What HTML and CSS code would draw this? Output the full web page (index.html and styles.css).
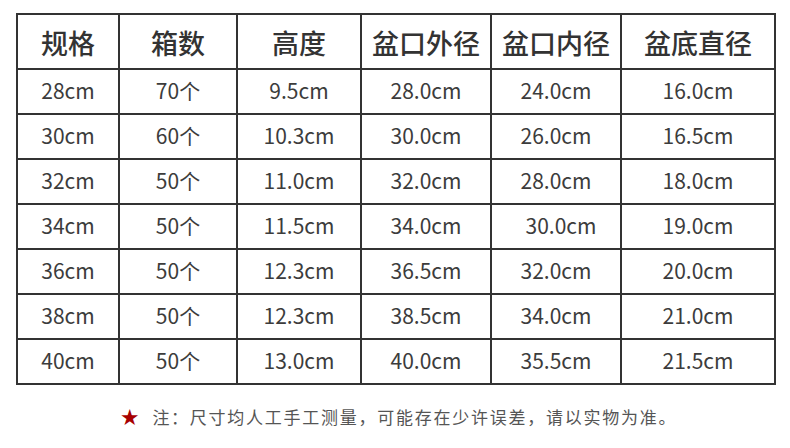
FILE: index.html
```html
<!DOCTYPE html>
<html lang="zh-CN">
<head>
<meta charset="utf-8">
<link rel="stylesheet" href="styles.css">
</head>
<body>
<div class="page">
  <table class="spec">
    <colgroup>
      <col class="c1"><col class="c2"><col class="c3"><col class="c4"><col class="c5"><col class="c6">
    </colgroup>
    <thead>
      <tr><th>规格</th><th>箱数</th><th>高度</th><th>盆口外径</th><th>盆口内径</th><th>盆底直径</th></tr>
    </thead>
    <tbody>
      <tr><td>28cm</td><td>70个</td><td>9.5cm</td><td>28.0cm</td><td>24.0cm</td><td>16.0cm</td></tr>
      <tr><td>30cm</td><td>60个</td><td>10.3cm</td><td>30.0cm</td><td>26.0cm</td><td>16.5cm</td></tr>
      <tr><td>32cm</td><td>50个</td><td>11.0cm</td><td>32.0cm</td><td>28.0cm</td><td>18.0cm</td></tr>
      <tr><td>34cm</td><td>50个</td><td>11.5cm</td><td>34.0cm</td><td class="shift">30.0cm</td><td>19.0cm</td></tr>
      <tr><td>36cm</td><td>50个</td><td>12.3cm</td><td>36.5cm</td><td>32.0cm</td><td>20.0cm</td></tr>
      <tr><td>38cm</td><td>50个</td><td>12.3cm</td><td>38.5cm</td><td>34.0cm</td><td>21.0cm</td></tr>
      <tr><td>40cm</td><td>50个</td><td>13.0cm</td><td>40.0cm</td><td>35.5cm</td><td>21.5cm</td></tr>
    </tbody>
  </table>
  <p class="note"><span class="star">★</span><span class="note-text">注：尺寸均人工手工测量，可能存在少许误差，请以实物为准。</span></p>
</div>
</body>
</html>
```
FILE: styles.css
```css
html, body {
  margin: 0;
  padding: 0;
  background: #ffffff;
}
.page {
  width: 790px;
  height: 448px;
  padding: 13px 0 0 16px;
  box-sizing: border-box;
  font-family: "Noto Sans CJK SC", "Noto Sans", sans-serif;
  color: #3c3c3c;
}
.spec {
  border-collapse: collapse;
  width: 758px;
  table-layout: fixed;
  border: 2px solid #333333;
}
.c1 { width: 102px; }
.c2 { width: 118px; }
.c3 { width: 124px; }
.c4 { width: 130px; }
.c5 { width: 130px; }
.c6 { width: 154px; }
.spec th, .spec td {
  border: 2px solid #333333;
  text-align: center;
  padding: 0;
}
.spec th {
  height: 51px;
  padding-top: 2px;
  font-size: 27px;
  font-weight: 500;
  color: #333333;
}
.spec td {
  height: 40px;
  padding-bottom: 3px;
  font-size: 21px;
  font-weight: 400;
}
.spec td.shift {
  padding-left: 10px;
}
.note {
  margin: 19px 0 0 -16px;
  padding-left: 8px;
  text-align: center;
  font-size: 17px;
  letter-spacing: 1.75px;
  color: #555555;
  line-height: 24px;
}
.star {
  color: #a80000;
  font-size: 18px;
  margin-right: 12px;
}
```
